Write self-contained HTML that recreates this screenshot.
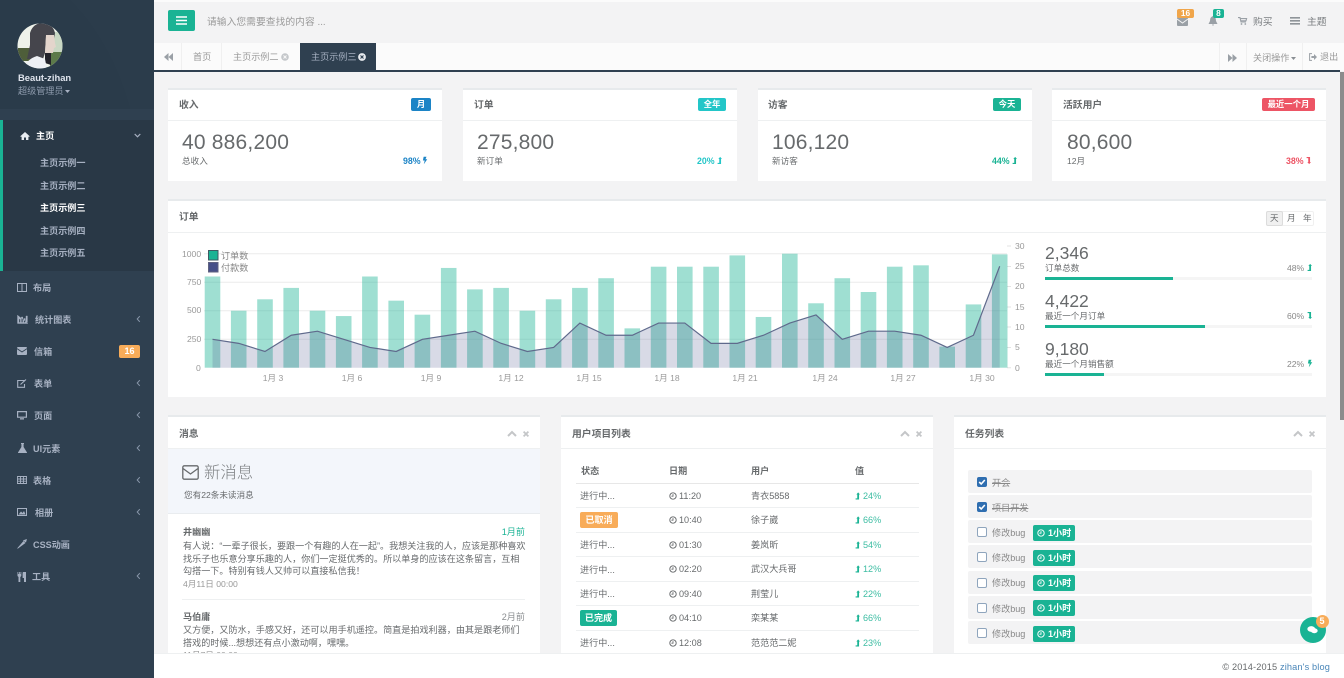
<!DOCTYPE html>
<html lang="zh-CN"><head><meta charset="utf-8"><title>主页示例三</title>
<style>
*{box-sizing:border-box}
html,body{margin:0;padding:0;width:1344px;height:678px;overflow:hidden;background:#f3f3f4}
body{position:relative;font-family:"Liberation Sans","Noto Sans CJK SC",sans-serif;font-size:9.1px;color:#676a6c}
.a{position:absolute}
.t{position:absolute;white-space:nowrap;line-height:12px}
.b{font-weight:700}
.card{position:absolute;background:#fff;border-top:2px solid #e7eaec}
.line{position:absolute;height:1px;background:#eef0f1}
.nav{position:absolute;white-space:nowrap;line-height:12px;color:#a7b1c2;font-weight:700;font-size:9.1px}
.lbl{position:absolute;color:#fff;font-weight:700;font-size:8.4px;text-align:center;line-height:13px;height:13px;border-radius:2px}
.num{position:absolute;font-size:21px;line-height:24px;letter-spacing:.2px;color:#676a6c;white-space:nowrap}
.n2{position:absolute;font-size:17.5px;line-height:20px;color:#676a6c;white-space:nowrap}
.ax{position:absolute;font-size:8.6px;line-height:10px;color:#999;white-space:nowrap}
.xl{position:absolute;font-size:8.6px;line-height:10px;color:#999;white-space:nowrap;transform:translateX(-50%);top:372.5px}
.task{position:absolute;left:968px;width:344px;height:23px;background:#f3f3f4;border-radius:2px}
.cb{position:absolute;left:977px;width:10px;height:10px;border:1px solid #8fa5bd;border-radius:2px;background:#fff}
.cb.on{background:#2f6eb0;border-color:#2f6eb0}
.tag{position:absolute;left:1033px;width:42px;height:16px;background:#1ab394;border-radius:2px;color:#fff;font-weight:700;font-size:9.1px;line-height:16px;white-space:nowrap;padding-left:15px}
svg{position:absolute;overflow:visible}
.sym{width:0;height:0}
</style></head><body>

<svg class="sym"><defs>
<symbol id="clock" viewBox="0 0 10 10"><circle cx="5" cy="5" r="4" fill="none" stroke="currentColor" stroke-width="1.2"/><path d="M5 2.6V5.3H3" fill="none" stroke="currentColor" stroke-width="1.1"/></symbol>
<symbol id="up" viewBox="0 0 8 10"><path d="M.8 8.2H3V3H1.8L4.2.2 6.6 3H5.4V9.6H.8z" fill="currentColor"/></symbol>
<symbol id="down" viewBox="0 0 8 10"><path d="M.8 1.8H3V7H1.8L4.2 9.8 6.6 7H5.4V.4H.8z" fill="currentColor"/></symbol>
<symbol id="bolt" viewBox="0 0 8 10"><path d="M2.2 0H6L4.6 3.4H7L2.4 10 3.6 5H1.2z" fill="currentColor"/></symbol>
<symbol id="cl" viewBox="0 0 10 10"><path d="M1 7 5 3 9 7" fill="none" stroke="currentColor" stroke-width="2"/></symbol>
<symbol id="tm" viewBox="0 0 10 10"><path d="M2 2 8 8M8 2 2 8" fill="none" stroke="currentColor" stroke-width="2.2"/></symbol>
<symbol id="lt" viewBox="0 0 6 10"><path d="M4.6 1.5 1.4 5 4.6 8.5" fill="none" stroke="currentColor" stroke-width="1.3"/></symbol>
<symbol id="chk" viewBox="0 0 10 10"><path d="M2.2 5 4.2 7 7.8 3" fill="none" stroke="#fff" stroke-width="1.6"/></symbol>
</defs></svg>

<!-- top strip -->
<div class="a" style="left:154px;top:0;width:1190px;height:2px;background:#fbfbfb"></div>

<!-- sidebar -->
<div class="a" style="left:0;top:0;width:154px;height:678px;background:#2f4050"></div>
<div class="a" style="left:0;top:0;width:154px;height:109px;background:#2a3b4a"></div>
<svg style="left:0;top:0" width="154" height="109"><path d="M70 0H154V109H130C120 70 100 30 70 0z" fill="#2b3c4b"/></svg>
<div class="a" style="left:0;top:120px;width:154px;height:151px;background:#293846;border-left:3px solid #1ab394"></div>

<svg style="left:17px;top:23px" width="46" height="46" viewBox="0 0 46 46">
<clipPath id="av"><circle cx="23" cy="23" r="22.5"/></clipPath>
<g clip-path="url(#av)">
<rect width="46" height="46" fill="#eef2ea"/>
<rect x="36" y="9" width="10" height="21" fill="#c9d8c4"/>
<rect x="1" y="25" width="13" height="13" fill="#4e5e3a"/>
<rect x="33" y="29" width="13" height="14" fill="#5c7a4a"/>
<path d="M13 10Q16 0 26 0 36 1 38 10L37 17 29 14 28 30 26 36 10 36 13 22z" fill="#45454c"/>
<path d="M29 12 37 12 38 20 39 24 37 25 36 30 28 30z" fill="#e4d5cc"/>
<path d="M28 30 34 30 34 42 28 40z" fill="#22222a"/>
<path d="M6 46Q10 36 20 33L28 36 30 46z" fill="#eef0f5"/>
</g></svg>
<div class="t b" style="left:18px;top:72px;color:#dfe4ed;font-size:9.4px">Beaut-zihan</div>
<div class="t" style="left:18px;top:85px;color:#8e9bad;font-size:9.1px">超级管理员</div>
<svg style="left:65px;top:90px" width="5" height="3"><path d="M0 0H5L2.5 3z" fill="#a7b1c2"/></svg>

<svg style="left:20px;top:131px" width="10" height="10" viewBox="0 0 10 10"><path d="M5 1 .3 5.2 1 6 1.6 5.5V9H4V6.5H6V9H8.4V5.5L9 6 9.7 5.2z" fill="#e8ecf1"/></svg>
<div class="nav" style="left:36px;top:130px;color:#fff">主页</div>
<svg style="left:134px;top:133px;color:#a7b1c2" width="7" height="5" viewBox="0 0 7 5"><path d="M.7 1 3.5 3.8 6.3 1" fill="none" stroke="currentColor" stroke-width="1.2"/></svg>
<div class="nav" style="left:40px;top:157px">主页示例一</div>
<div class="nav" style="left:40px;top:180px">主页示例二</div>
<div class="nav" style="left:40px;top:202px;color:#fff">主页示例三</div>
<div class="nav" style="left:40px;top:225px">主页示例四</div>
<div class="nav" style="left:40px;top:247px">主页示例五</div>

<svg style="left:17px;top:283px" width="10" height="9" viewBox="0 0 10 9"><path d="M.5.5H9.5V8.5H.5zM5 .5V8.5" fill="none" stroke="#a7b1c2" stroke-width="1"/></svg>
<div class="nav" style="left:33px;top:281.5px">布局</div>
<svg style="left:17px;top:315px" width="11" height="9" viewBox="0 0 11 9"><path d="M.5 0V8.5H11M2 4H3.4V7.5H2zM4.4 2H5.8V7.5H4.4zM6.8 3.5H8.2V7.5H6.8zM9 1H10.4V7.5H9z" fill="#a7b1c2" stroke="#a7b1c2" stroke-width=".4"/></svg>
<div class="nav" style="left:35px;top:313.5px">统计图表</div>
<svg style="left:17px;top:347px" width="10" height="8" viewBox="0 0 10 8"><rect width="10" height="8" rx="1" fill="#a7b1c2"/><path d="M0 1.6 5 5 10 1.6" fill="none" stroke="#2f4050" stroke-width=".9"/></svg>
<div class="nav" style="left:34px;top:345.5px">信箱</div>
<div class="lbl" style="left:119px;top:345px;width:21px;background:#f8ac59;font-size:9px">16</div>
<svg style="left:17px;top:379px" width="10" height="9" viewBox="0 0 10 9"><path d="M7.5 1.5H.7V8.3H7.5V5M3.5 5.5 9 .5" fill="none" stroke="#a7b1c2" stroke-width="1.1"/></svg>
<div class="nav" style="left:34px;top:377.5px">表单</div>
<svg style="left:17px;top:411px" width="10" height="9" viewBox="0 0 10 9"><path d="M.6.6H9.4V6.2H.6z" fill="none" stroke="#a7b1c2" stroke-width="1.2"/><path d="M3 8.5H7V7.2H3z" fill="#a7b1c2"/></svg>
<div class="nav" style="left:34px;top:409.5px">页面</div>
<svg style="left:18px;top:443px" width="9" height="10" viewBox="0 0 9 10"><path d="M3 0H6V1H5.6V4L9 9.5V10H0V9.5L3.4 4V1H3z" fill="#a7b1c2"/></svg>
<div class="nav" style="left:33px;top:442.5px">UI元素</div>
<svg style="left:17px;top:476px" width="10" height="8" viewBox="0 0 10 8"><path d="M.5.5H9.5V7.5H.5zM.5 3H9.5M.5 5.2H9.5M3.5.5V7.5M6.5.5V7.5" fill="none" stroke="#a7b1c2" stroke-width=".9"/></svg>
<div class="nav" style="left:33px;top:474.5px">表格</div>
<svg style="left:17px;top:508px" width="10" height="8" viewBox="0 0 10 8"><path d="M.5.5H9.5V7.5H.5z" fill="none" stroke="#a7b1c2"/><path d="M1.5 6.5 4 3.5 5.6 5 7 3 8.6 6.5z" fill="#a7b1c2"/></svg>
<div class="nav" style="left:35px;top:506.5px">相册</div>
<svg style="left:17px;top:539px" width="10" height="10" viewBox="0 0 10 10"><path d="M.5 9.5 6.5 2.5 8 4z M6.5 1.5 9.5.5 8.8 3z" fill="#a7b1c2" stroke="#a7b1c2" stroke-width=".6"/></svg>
<div class="nav" style="left:33px;top:538.5px">CSS动画</div>
<svg style="left:17px;top:572px" width="10" height="10" viewBox="0 0 10 10"><path d="M.5 0H1.3V2H2V0H2.8V2H3.5V0H4.3V4L3.3 5V10H1.5V5L.5 4zM6 0H9V10H7V6H5.6V2Q5.6.5 6 0z" fill="#a7b1c2"/></svg>
<div class="nav" style="left:32px;top:570.5px">工具</div>

<svg style="left:136px;top:315px;color:#8795a8" width="5" height="8"><use href="#lt"/></svg>
<svg style="left:136px;top:379px;color:#8795a8" width="5" height="8"><use href="#lt"/></svg>
<svg style="left:136px;top:411px;color:#8795a8" width="5" height="8"><use href="#lt"/></svg>
<svg style="left:136px;top:444px;color:#8795a8" width="5" height="8"><use href="#lt"/></svg>
<svg style="left:136px;top:476px;color:#8795a8" width="5" height="8"><use href="#lt"/></svg>
<svg style="left:136px;top:508px;color:#8795a8" width="5" height="8"><use href="#lt"/></svg>
<svg style="left:136px;top:572px;color:#8795a8" width="5" height="8"><use href="#lt"/></svg>

<!-- top bar -->
<div class="a" style="left:168px;top:10px;width:27px;height:21px;background:#1ab394;border-radius:2px"></div>
<svg style="left:176px;top:16px" width="11" height="9"><path d="M0 1H11M0 4.5H11M0 8H11" stroke="#fff" stroke-width="1.4"/></svg>
<div class="t" style="left:207px;top:17px;color:#999;font-size:9.8px">请输入您需要查找的内容 ...</div>

<svg style="left:1177px;top:16px" width="11" height="10" viewBox="0 0 11 10"><rect y="1" width="11" height="9" rx="1" fill="#9aa0a6"/><path d="M0 3 5.5 7 11 3" fill="none" stroke="#f3f3f4"/></svg>
<div class="lbl" style="left:1177px;top:9px;width:17px;height:9px;line-height:9px;background:#f0a54a;font-size:8.4px">16</div>
<svg style="left:1208px;top:16px" width="10" height="10" viewBox="0 0 10 10"><path d="M5 0Q8 1 8 5L9.5 8H.5L2 5Q2 1 5 0zM4 8.5H6L5 10z" fill="#9aa0a6"/></svg>
<div class="lbl" style="left:1213px;top:9px;width:11px;height:9px;line-height:9px;background:#1ab394;font-size:8.4px">8</div>
<svg style="left:1238px;top:17px" width="9" height="8" viewBox="0 0 9 8"><path d="M0 .6H2L3 5H8M2.3 1.6H8.6L8 3.8H2.8" fill="none" stroke="#9aa0a6" stroke-width="1.1"/><circle cx="3.5" cy="7" r=".9" fill="#9aa0a6"/><circle cx="7.3" cy="7" r=".9" fill="#9aa0a6"/></svg>
<div class="t" style="left:1253px;top:16.5px;font-size:9.8px;color:#7d8083">购买</div>
<svg style="left:1290px;top:17px" width="10" height="8"><path d="M0 0H10V1.6H0zM0 3H10V4.6H0zM0 6H10V7.6H0z" fill="#8f9499"/></svg>
<div class="t" style="left:1307px;top:16.5px;font-size:9.8px;color:#7d8083">主题</div>

<!-- tabs -->
<div class="a" style="left:154px;top:43px;width:1190px;height:28px;background:#fbfbfb"></div>
<div class="a" style="left:181px;top:43px;width:1px;height:27px;background:#f0f0f0"></div>
<div class="a" style="left:221px;top:43px;width:1px;height:27px;background:#f0f0f0"></div>
<div class="a" style="left:1219px;top:43px;width:1px;height:27px;background:#f0f0f0"></div>
<div class="a" style="left:1246px;top:43px;width:1px;height:27px;background:#f0f0f0"></div>
<div class="a" style="left:1302px;top:43px;width:1px;height:27px;background:#f0f0f0"></div>
<div class="a" style="left:300px;top:43px;width:76px;height:28px;background:#2f4050"></div>
<div class="a" style="left:154px;top:70px;width:1186px;height:2px;background:#2f4050"></div>
<svg style="left:164px;top:53px" width="9" height="8"><path d="M4.5 0V8L0 4zM9 0V8L4.5 4z" fill="#9aa0a6"/></svg>
<div class="t" style="left:193px;top:51px;color:#999">首页</div>
<div class="t" style="left:233px;top:51px;color:#999">主页示例二</div>
<svg style="left:281px;top:53px" width="8" height="8" viewBox="0 0 8 8"><circle cx="4" cy="4" r="3.8" fill="#c4c7ca"/><path d="M2.5 2.5 5.5 5.5M5.5 2.5 2.5 5.5" stroke="#fafafa" stroke-width="1"/></svg>
<div class="t" style="left:311px;top:51px;color:#a7b1c2">主页示例三</div>
<svg style="left:358px;top:53px" width="8" height="8" viewBox="0 0 8 8"><circle cx="4" cy="4" r="3.9" fill="#e8ebef"/><path d="M2.5 2.5 5.5 5.5M5.5 2.5 2.5 5.5" stroke="#2f4050" stroke-width="1.1"/></svg>
<svg style="left:1228px;top:54px" width="9" height="8"><path d="M0 0V8L4.5 4zM4.5 0V8L9 4z" fill="#9aa0a6"/></svg>
<div class="t" style="left:1253px;top:52px;color:#999">关闭操作</div>
<svg style="left:1291px;top:57px" width="5" height="3"><path d="M0 0H5L2.5 3z" fill="#8a8f94"/></svg>
<svg style="left:1309px;top:53px" width="8" height="8" viewBox="0 0 8 8"><path d="M3 .6H.6V7.4H3" fill="none" stroke="#9aa0a6"/><path d="M2.4 3H5V1L8 4 5 7V5H2.4z" fill="#9aa0a6"/></svg>
<div class="t" style="left:1320px;top:51px;color:#999">退出</div>

<!-- scrollbar -->
<div class="a" style="left:1340px;top:72px;width:4px;height:348px;background:#8c8c8c"></div>

<!-- stat cards -->
<div class="card" style="left:168px;top:88px;width:274px;height:93px"></div>
<div class="card" style="left:463px;top:88px;width:274px;height:93px"></div>
<div class="card" style="left:758px;top:88px;width:274px;height:93px"></div>
<div class="card" style="left:1052px;top:88px;width:274px;height:93px"></div>
<div class="line" style="left:168px;top:120px;width:274px"></div>
<div class="line" style="left:463px;top:120px;width:274px"></div>
<div class="line" style="left:758px;top:120px;width:274px"></div>
<div class="line" style="left:1052px;top:120px;width:274px"></div>

<div class="t b" style="left:179px;top:100px;font-size:9.8px">收入</div>
<div class="t b" style="left:474px;top:100px;font-size:9.8px">订单</div>
<div class="t b" style="left:768px;top:100px;font-size:9.8px">访客</div>
<div class="t b" style="left:1063px;top:100px;font-size:9.8px">活跃用户</div>
<div class="lbl" style="left:411px;top:98px;width:20px;background:#1c84c6">月</div>
<div class="lbl" style="left:698px;top:98px;width:28px;background:#23c6c8">全年</div>
<div class="lbl" style="left:993px;top:98px;width:28px;background:#1ab394">今天</div>
<div class="lbl" style="left:1262px;top:98px;width:53px;background:#ed5565">最近一个月</div>
<div class="num" style="left:182px;top:131px">40 886,200</div>
<div class="num" style="left:477px;top:131px">275,800</div>
<div class="num" style="left:772px;top:131px">106,120</div>
<div class="num" style="left:1067px;top:131px">80,600</div>
<div class="t" style="left:182px;top:155px;font-size:8.6px">总收入</div>
<div class="t" style="left:477px;top:155px;font-size:8.6px">新订单</div>
<div class="t" style="left:772px;top:155px;font-size:8.6px">新访客</div>
<div class="t" style="left:1067px;top:155px;font-size:8.6px">12月</div>
<div class="t b" style="left:403px;top:155px;color:#1c84c6;font-size:8.8px">98%</div>
<svg style="left:422px;top:156px;color:#1c84c6" width="6" height="9"><use href="#bolt"/></svg>
<div class="t b" style="left:697px;top:155px;color:#23c6c8;font-size:8.8px">20%</div>
<svg style="left:717px;top:156px;color:#23c6c8" width="6" height="9"><use href="#up"/></svg>
<div class="t b" style="left:992px;top:155px;color:#1ab394;font-size:8.8px">44%</div>
<svg style="left:1012px;top:156px;color:#1ab394" width="6" height="9"><use href="#up"/></svg>
<div class="t b" style="left:1286px;top:155px;color:#ed5565;font-size:8.8px">38%</div>
<svg style="left:1306px;top:156px;color:#ed5565" width="6" height="9"><use href="#down"/></svg>

<!-- chart card -->
<div class="card" style="left:168px;top:199px;width:1158px;height:198px"></div>
<div class="line" style="left:168px;top:232px;width:1158px"></div>
<div class="t b" style="left:179px;top:212px;font-size:9.8px">订单</div>
<div class="a" style="left:1266px;top:211px;width:48px;height:15px;border:1px solid #f0f0f0;border-radius:2px"></div>
<div class="a" style="left:1266px;top:211px;width:17px;height:15px;background:#f0f0f0;border:1px solid #dcdcdc;border-radius:2px"></div>
<div class="t" style="left:1270px;top:213px;font-size:8.6px;line-height:11px">天</div>
<div class="t" style="left:1287px;top:213px;font-size:8.6px;line-height:11px">月</div>
<div class="t" style="left:1303px;top:213px;font-size:8.6px;line-height:11px">年</div>

<svg style="left:0;top:0" width="1344" height="678">
<path d="M204 253.7H1007M204 282.2H1007M204 310.7H1007M204 339.2H1007" stroke="#ececec" stroke-width="1"/>
<path d="M1007 246H1011M1007 266.5H1011M1007 286.5H1011M1007 307H1011M1007 327H1011M1007 347.5H1011M1007 367.7H1011" stroke="#e3e3e3" stroke-width="1"/>
<g transform="translate(0 367.7) scale(1 -.114)" fill="#1ab394" fill-opacity=".42">
<rect x="204.7" width="15.6" height="800"/><rect x="230.9" width="15.6" height="500"/><rect x="257.2" width="15.6" height="600"/><rect x="283.4" width="15.6" height="700"/><rect x="309.7" width="15.6" height="500"/><rect x="335.9" width="15.6" height="453"/><rect x="362.1" width="15.6" height="800"/><rect x="388.4" width="15.6" height="588"/><rect x="414.6" width="15.6" height="465"/><rect x="440.9" width="15.6" height="875"/><rect x="467.1" width="15.6" height="687"/><rect x="493.3" width="15.6" height="700"/><rect x="519.6" width="15.6" height="500"/><rect x="545.8" width="15.6" height="600"/><rect x="572.1" width="15.6" height="700"/><rect x="598.3" width="15.6" height="785"/><rect x="624.5" width="15.6" height="345"/><rect x="650.8" width="15.6" height="886"/><rect x="677" width="15.6" height="886"/><rect x="703.3" width="15.6" height="886"/><rect x="729.5" width="15.6" height="985"/><rect x="755.7" width="15.6" height="445"/><rect x="782" width="15.6" height="1000"/><rect x="808.2" width="15.6" height="565"/><rect x="834.5" width="15.6" height="785"/><rect x="860.7" width="15.6" height="664"/><rect x="886.9" width="15.6" height="886"/><rect x="913.2" width="15.6" height="898"/><rect x="939.4" width="15.6" height="185"/><rect x="965.7" width="15.6" height="555"/><rect x="991.9" width="15.6" height="994"/>
</g>
<g transform="translate(212.5 367.7) scale(26.24 -4.057)">
<polygon fill="#464f88" fill-opacity=".21" points="0,0 0,7 1,6 2,4 3,8 4,9 5,7 6,5 7,4 8,7 9,8 10,9 11,6 12,4 13,5 14,11 15,8 16,8 17,11 18,11 19,6 20,6 21,8 22,11 23,13 24,7 25,9 26,9 27,8 28,5 29,8 30,25 30,0"/>
<polyline fill="none" stroke="#5f6a8c" stroke-width="1.2" vector-effect="non-scaling-stroke" points="0,7 1,6 2,4 3,8 4,9 5,7 6,5 7,4 8,7 9,8 10,9 11,6 12,4 13,5 14,11 15,8 16,8 17,11 18,11 19,6 20,6 21,8 22,11 23,13 24,7 25,9 26,9 27,8 28,5 29,8 30,25"/>
</g>
<rect x="208.5" y="250.5" width="9.5" height="9.5" fill="#1ab394" stroke="#3f5a63"/>
<rect x="208.5" y="262.5" width="9.5" height="9.5" fill="#464f88" stroke="#5f6280"/>
</svg>
<div class="t" style="left:221px;top:249.5px;color:#888">订单数</div>
<div class="t" style="left:221px;top:261.5px;color:#888">付款数</div>
<div class="ax" style="left:182px;top:249px">1000</div>
<div class="ax" style="left:187px;top:277px">750</div>
<div class="ax" style="left:187px;top:305px">500</div>
<div class="ax" style="left:187px;top:334px">250</div>
<div class="ax" style="left:196px;top:363px">0</div>
<div class="ax" style="left:1015px;top:241px">30</div>
<div class="ax" style="left:1015px;top:261px">25</div>
<div class="ax" style="left:1015px;top:281px">20</div>
<div class="ax" style="left:1015px;top:302px">15</div>
<div class="ax" style="left:1015px;top:322px">10</div>
<div class="ax" style="left:1015px;top:342px">5</div>
<div class="ax" style="left:1015px;top:363px">0</div>
<div class="xl" style="left:273px">1月 3</div>
<div class="xl" style="left:352px">1月 6</div>
<div class="xl" style="left:431px">1月 9</div>
<div class="xl" style="left:511px">1月 12</div>
<div class="xl" style="left:589px">1月 15</div>
<div class="xl" style="left:667px">1月 18</div>
<div class="xl" style="left:745px">1月 21</div>
<div class="xl" style="left:825px">1月 24</div>
<div class="xl" style="left:903px">1月 27</div>
<div class="xl" style="left:982px">1月 30</div>

<div class="n2" style="left:1045px;top:243px">2,346</div>
<div class="t" style="left:1045px;top:262px;font-size:8.6px">订单总数</div>
<div class="t" style="left:1287px;top:262px;font-size:8.6px;color:#888">48%</div>
<svg style="left:1307px;top:263px;color:#1ab394" width="6" height="9"><use href="#up"/></svg>
<div class="a" style="left:1045px;top:277px;width:267px;height:3px;background:#f5f5f5"></div>
<div class="a" style="left:1045px;top:277px;width:128px;height:3px;background:#1ab394"></div>
<div class="n2" style="left:1045px;top:291px">4,422</div>
<div class="t" style="left:1045px;top:310px;font-size:8.6px">最近一个月订单</div>
<div class="t" style="left:1287px;top:310px;font-size:8.6px;color:#888">60%</div>
<svg style="left:1307px;top:311px;color:#1ab394" width="6" height="9"><use href="#down"/></svg>
<div class="a" style="left:1045px;top:325px;width:267px;height:3px;background:#f5f5f5"></div>
<div class="a" style="left:1045px;top:325px;width:160px;height:3px;background:#1ab394"></div>
<div class="n2" style="left:1045px;top:339px">9,180</div>
<div class="t" style="left:1045px;top:358px;font-size:8.6px">最近一个月销售额</div>
<div class="t" style="left:1287px;top:358px;font-size:8.6px;color:#888">22%</div>
<svg style="left:1307px;top:359px;color:#1ab394" width="6" height="9"><use href="#bolt"/></svg>
<div class="a" style="left:1045px;top:373px;width:267px;height:3px;background:#f5f5f5"></div>
<div class="a" style="left:1045px;top:373px;width:59px;height:3px;background:#1ab394"></div>

<!-- bottom panels -->
<div class="card" style="left:168px;top:415px;width:372px;height:240px"></div>
<div class="card" style="left:561px;top:415px;width:372px;height:240px"></div>
<div class="card" style="left:954px;top:415px;width:372px;height:240px"></div>
<div class="line" style="left:168px;top:448px;width:372px"></div>
<div class="line" style="left:561px;top:448px;width:372px"></div>
<div class="line" style="left:954px;top:448px;width:372px"></div>
<div class="t b" style="left:179px;top:429px;font-size:9.8px">消息</div>
<div class="t b" style="left:572px;top:429px;font-size:9.8px">用户项目列表</div>
<div class="t b" style="left:965px;top:429px;font-size:9.8px">任务列表</div>
<svg style="left:507px;top:429px;color:#c4c6c8" width="10" height="10"><use href="#cl"/></svg>
<svg style="left:522px;top:430px;color:#c4c6c8" width="8" height="8"><use href="#tm"/></svg>
<svg style="left:900px;top:429px;color:#c4c6c8" width="10" height="10"><use href="#cl"/></svg>
<svg style="left:915px;top:430px;color:#c4c6c8" width="8" height="8"><use href="#tm"/></svg>
<svg style="left:1293px;top:429px;color:#c4c6c8" width="10" height="10"><use href="#cl"/></svg>
<svg style="left:1308px;top:430px;color:#c4c6c8" width="8" height="8"><use href="#tm"/></svg>

<!-- messages -->
<div class="a" style="left:168px;top:449px;width:372px;height:65px;background:#f3f6fb;border-bottom:1px solid #e9ecef"></div>
<svg style="left:182px;top:465px" width="17" height="15" viewBox="0 0 17 15"><rect x=".8" y=".8" width="15.4" height="13.4" rx="1.5" fill="none" stroke="#676a6c" stroke-width="1.3"/><path d="M1 3.5 8.5 9 16 3.5" fill="none" stroke="#676a6c" stroke-width="1.3"/></svg>
<div class="t" style="left:204px;top:463px;font-size:16.4px;line-height:20px;color:#7d8083;font-weight:300">新消息</div>
<div class="t" style="left:184px;top:489px;font-size:8.6px">您有22条未读消息</div>
<div class="t b" style="left:183px;top:526px;font-size:9.1px">井幽幽</div>
<div class="t" style="right:819px;top:526px;color:#1ab394">1月前</div>
<div class="a" style="left:183px;top:540px;width:345px;font-size:9.1px;line-height:12.6px;white-space:nowrap">有人说：“一辈子很长，要跟一个有趣的人在一起”。我想关注我的人，应该是那种喜欢<br>找乐子也乐意分享乐趣的人，你们一定挺优秀的。所以单身的应该在这条留言，互相<br>勾搭一下。特别有钱人又帅可以直接私信我！<br><span style="color:#999;font-size:8.6px">4月11日 00:00</span></div>
<div class="line" style="left:182px;top:599px;width:343px"></div>
<div class="t b" style="left:183px;top:611px;font-size:9.1px">马伯庸</div>
<div class="t" style="right:819px;top:611px;color:#8a8d90">2月前</div>
<div class="a" style="left:183px;top:624px;width:345px;font-size:9.1px;line-height:12.6px;white-space:nowrap">又方便，又防水，手感又好，还可以用手机遥控。简直是拍戏利器，由其是跟老师们<br>搭戏的时候...想想还有点小激动啊，嘿嘿。<br><span style="color:#999;font-size:8.6px">11月7日 00:00</span></div>

<!-- table -->
<div class="t b" style="left:581px;top:465px">状态</div>
<div class="t b" style="left:669px;top:465px">日期</div>
<div class="t b" style="left:751px;top:465px">用户</div>
<div class="t b" style="left:855px;top:465px">值</div>
<div class="line" style="left:576px;top:483px;width:343px;background:#e7e7e7"></div>
<div class="line" style="left:576px;top:507px;width:343px"></div>
<div class="line" style="left:576px;top:532px;width:343px"></div>
<div class="line" style="left:576px;top:556px;width:343px"></div>
<div class="line" style="left:576px;top:581px;width:343px"></div>
<div class="line" style="left:576px;top:605px;width:343px"></div>
<div class="line" style="left:576px;top:630px;width:343px"></div>

<div class="t" style="left:580px;top:490px">进行中...</div>
<div class="lbl" style="left:580px;top:512px;width:38px;height:16px;line-height:16px;background:#f8ac59;font-size:9.1px">已取消</div>
<div class="t" style="left:580px;top:539px">进行中...</div>
<div class="t" style="left:580px;top:564px">进行中...</div>
<div class="t" style="left:580px;top:588px">进行中...</div>
<div class="lbl" style="left:580px;top:610px;width:37px;height:16px;line-height:16px;background:#1ab394;font-size:9.1px">已完成</div>
<div class="t" style="left:580px;top:637px">进行中...</div>

<svg style="left:669px;top:492px;color:#676a6c" width="8" height="8"><use href="#clock"/></svg>
<svg style="left:669px;top:516px;color:#676a6c" width="8" height="8"><use href="#clock"/></svg>
<svg style="left:669px;top:541px;color:#676a6c" width="8" height="8"><use href="#clock"/></svg>
<svg style="left:669px;top:565px;color:#676a6c" width="8" height="8"><use href="#clock"/></svg>
<svg style="left:669px;top:590px;color:#676a6c" width="8" height="8"><use href="#clock"/></svg>
<svg style="left:669px;top:614px;color:#676a6c" width="8" height="8"><use href="#clock"/></svg>
<svg style="left:669px;top:639px;color:#676a6c" width="8" height="8"><use href="#clock"/></svg>
<div class="t" style="left:679px;top:490px">11:20</div>
<div class="t" style="left:679px;top:514px">10:40</div>
<div class="t" style="left:679px;top:539px">01:30</div>
<div class="t" style="left:679px;top:563px">02:20</div>
<div class="t" style="left:679px;top:588px">09:40</div>
<div class="t" style="left:679px;top:612px">04:10</div>
<div class="t" style="left:679px;top:637px">12:08</div>
<div class="t" style="left:751px;top:490px">青衣5858</div>
<div class="t" style="left:751px;top:514px">徐子崴</div>
<div class="t" style="left:751px;top:539px">姜岚昕</div>
<div class="t" style="left:751px;top:563px">武汉大兵哥</div>
<div class="t" style="left:751px;top:588px">荆莹儿</div>
<div class="t" style="left:751px;top:612px">栾某某</div>
<div class="t" style="left:751px;top:637px">范范范二妮</div>
<svg style="left:855px;top:492px;color:#1ab394" width="6" height="8"><use href="#up"/></svg>
<svg style="left:855px;top:516px;color:#1ab394" width="6" height="8"><use href="#up"/></svg>
<svg style="left:855px;top:541px;color:#1ab394" width="6" height="8"><use href="#up"/></svg>
<svg style="left:855px;top:565px;color:#1ab394" width="6" height="8"><use href="#up"/></svg>
<svg style="left:855px;top:590px;color:#1ab394" width="6" height="8"><use href="#up"/></svg>
<svg style="left:855px;top:614px;color:#1ab394" width="6" height="8"><use href="#up"/></svg>
<svg style="left:855px;top:639px;color:#1ab394" width="6" height="8"><use href="#up"/></svg>
<div class="t" style="left:863px;top:490px;color:#3dbda3">24%</div>
<div class="t" style="left:863px;top:514px;color:#3dbda3">66%</div>
<div class="t" style="left:863px;top:539px;color:#3dbda3">54%</div>
<div class="t" style="left:863px;top:563px;color:#3dbda3">12%</div>
<div class="t" style="left:863px;top:588px;color:#3dbda3">22%</div>
<div class="t" style="left:863px;top:612px;color:#3dbda3">66%</div>
<div class="t" style="left:863px;top:637px;color:#3dbda3">23%</div>

<!-- tasks -->
<div class="task" style="top:470px"></div>
<div class="task" style="top:495px"></div>
<div class="task" style="top:520px"></div>
<div class="task" style="top:545px"></div>
<div class="task" style="top:571px"></div>
<div class="task" style="top:596px"></div>
<div class="task" style="top:621px"></div>
<div class="cb on" style="top:477px"></div><svg style="left:977px;top:477px" width="10" height="10"><use href="#chk"/></svg>
<div class="cb on" style="top:502px"></div><svg style="left:977px;top:502px" width="10" height="10"><use href="#chk"/></svg>
<div class="cb" style="top:527px"></div>
<div class="cb" style="top:552px"></div>
<div class="cb" style="top:578px"></div>
<div class="cb" style="top:603px"></div>
<div class="cb" style="top:628px"></div>
<div class="t" style="left:992px;top:477px;text-decoration:line-through;color:#888">开会</div>
<div class="t" style="left:992px;top:502px;text-decoration:line-through;color:#888">项目开发</div>
<div class="t" style="left:992px;top:527px;color:#888">修改bug</div>
<div class="t" style="left:992px;top:552px;color:#888">修改bug</div>
<div class="t" style="left:992px;top:577px;color:#888">修改bug</div>
<div class="t" style="left:992px;top:603px;color:#888">修改bug</div>
<div class="t" style="left:992px;top:628px;color:#888">修改bug</div>
<div class="tag" style="top:525px">1小时</div>
<div class="tag" style="top:550px">1小时</div>
<div class="tag" style="top:575px">1小时</div>
<div class="tag" style="top:600px">1小时</div>
<div class="tag" style="top:626px">1小时</div>
<svg style="left:1037px;top:529px;color:#fff" width="8" height="8"><use href="#clock"/></svg>
<svg style="left:1037px;top:554px;color:#fff" width="8" height="8"><use href="#clock"/></svg>
<svg style="left:1037px;top:579px;color:#fff" width="8" height="8"><use href="#clock"/></svg>
<svg style="left:1037px;top:604px;color:#fff" width="8" height="8"><use href="#clock"/></svg>
<svg style="left:1037px;top:630px;color:#fff" width="8" height="8"><use href="#clock"/></svg>

<!-- footer -->
<div class="a" style="left:154px;top:653px;width:1190px;height:25px;background:#fff;border-top:1px solid #eef0f1"></div>
<div class="t" style="right:14px;top:661px;font-size:9.2px;letter-spacing:.15px">© 2014-2015 <span style="color:#4a86b8">zihan's blog</span></div>

<!-- chat -->
<div class="a" style="left:1299.5px;top:616.5px;width:26.5px;height:26.5px;border-radius:50%;background:#1ab394"></div>
<svg style="left:1307px;top:626px" width="11" height="8" viewBox="0 0 12 9"><ellipse cx="4.6" cy="3.4" rx="4.4" ry="3.2" fill="#fff"/><ellipse cx="8" cy="5.4" rx="3.8" ry="2.8" fill="#fff"/></svg>
<div class="a" style="left:1315.5px;top:614.5px;width:13px;height:13px;border-radius:50%;background:#f8ac59;color:#fff;font-weight:700;font-size:9px;line-height:13px;text-align:center">5</div>

</body></html>
